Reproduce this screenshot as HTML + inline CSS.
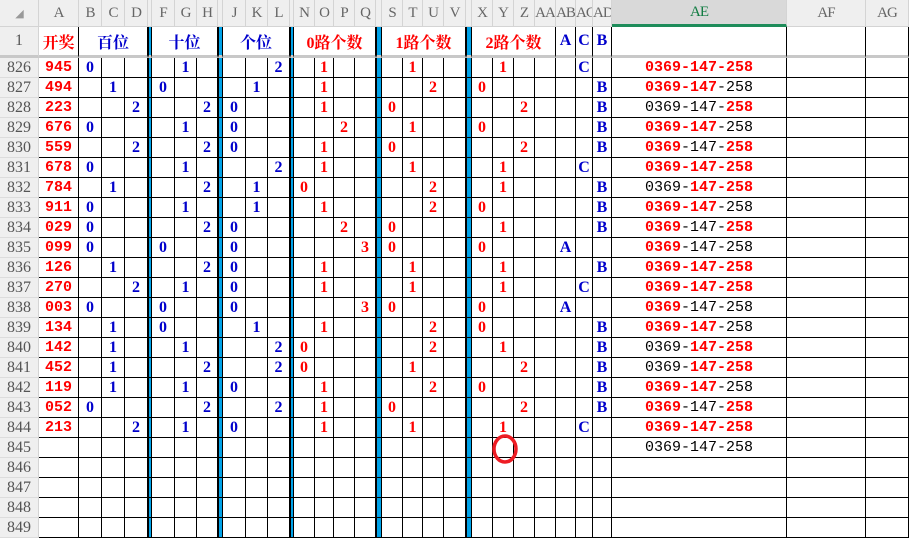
<!DOCTYPE html>
<html><head><meta charset="utf-8"><style>
*{margin:0;padding:0;box-sizing:border-box}
body{width:909px;height:538px;overflow:hidden;background:#fff;position:relative}
table{border-collapse:separate;border-spacing:0;table-layout:fixed;width:909px;font-family:"Liberation Mono",monospace;font-size:15px;font-weight:bold}
td,th{padding:0;text-align:center;white-space:nowrap;overflow:hidden}
tr.hd td,tr.hd th{height:27px;background:#efefef;color:#666;font-weight:normal;font-family:"Liberation Serif",serif;font-size:15px;border-right:1px solid #d4d4d4;border-bottom:1px solid #d4d4d4;letter-spacing:-1px}
tr.hd td.sel{background:#d9d9d9;color:#107c41;border-bottom:3px solid #1e8c5a}
th{background:#efefef;color:#555;font-weight:normal;font-family:"Liberation Serif",serif;font-size:16px;border-right:1px solid #d4d4d4;border-bottom:1px solid #dcdcdc}
tr.h1 td,tr.h1 th{height:31px;border-bottom:3px solid #c8c8c8}
tr.h1 td{border-right:1px solid #000;font-family:"Liberation Serif","Noto Serif CJK SC",serif;font-size:16px;font-weight:bold}
tr.d td{height:20px;border-right:1px solid #000;border-bottom:1px solid #000;line-height:19px;font-family:"Liberation Serif",serif;font-size:16px}
tr.d th{height:20px}
.r{color:#f00}.u{color:#0000cc}
td.bl{background:#00a2e8;border-left:1px solid #000}
tr.d td:nth-child(2){color:#f00;font-family:"Liberation Mono",monospace;font-size:15px}
tr.d td:nth-child(n+3){color:#0000cc}
tr.d td:nth-child(n+15){color:#f00}
tr.d td:nth-child(n+29){color:#0000cc}
tr.d td:nth-child(6),tr.d td:nth-child(10),tr.d td:nth-child(14),tr.d td:nth-child(19),tr.d td:nth-child(24){background:#00a2e8;border-left:1px solid #000}
tr.d td:nth-child(32){color:#000;font-weight:normal;font-family:"Liberation Mono",monospace;font-size:15px}
tr.d td:nth-child(32) b{color:#f00}
</style></head><body>
<table>
<colgroup><col style="width:39px"><col style="width:40px"><col style="width:23px"><col style="width:23px"><col style="width:23px"><col style="width:4px"><col style="width:23px"><col style="width:22px"><col style="width:21px"><col style="width:5px"><col style="width:23px"><col style="width:22px"><col style="width:22px"><col style="width:4px"><col style="width:21px"><col style="width:19px"><col style="width:21px"><col style="width:21px"><col style="width:6px"><col style="width:21px"><col style="width:20px"><col style="width:21px"><col style="width:22px"><col style="width:6px"><col style="width:21px"><col style="width:21px"><col style="width:21px"><col style="width:21px"><col style="width:20px"><col style="width:17px"><col style="width:19px"><col style="width:175px"><col style="width:79px"><col style="width:43px"></colgroup>
<tr class="hd"><td style="color:#999;font-size:11px">◢</td><td>A</td><td>B</td><td>C</td><td>D</td><td></td><td>F</td><td>G</td><td>H</td><td></td><td>J</td><td>K</td><td>L</td><td></td><td>N</td><td>O</td><td>P</td><td>Q</td><td></td><td>S</td><td>T</td><td>U</td><td>V</td><td></td><td>X</td><td>Y</td><td>Z</td><td>AA</td><td>AB</td><td>AC</td><td>AD</td><td class="sel">AE</td><td>AF</td><td>AG</td></tr>
<tr class="h1"><th>1</th><td class="r">开奖</td><td colspan="3" class="u">百位</td><td class="bl"></td><td colspan="3" class="u">十位</td><td class="bl"></td><td colspan="3" class="u">个位</td><td class="bl"></td><td colspan="4" class="r">0路个数</td><td class="bl"></td><td colspan="4" class="r">1路个数</td><td class="bl"></td><td colspan="4" class="r">2路个数</td><td class="u">A</td><td class="u">C</td><td class="u">B</td><td></td><td></td><td></td></tr>
<tr class="d"><th>826<td>945<td>0<td><td><td><td><td>1<td><td><td><td><td>2<td><td><td>1<td><td><td><td><td>1<td><td><td><td><td>1<td><td><td><td>C<td><td><b>0369-147-258</b><td><td></tr>
<tr class="d"><th>827<td>494<td><td>1<td><td><td>0<td><td><td><td><td>1<td><td><td><td>1<td><td><td><td><td><td>2<td><td><td>0<td><td><td><td><td><td>B<td><b>0369-147</b>-258<td><td></tr>
<tr class="d"><th>828<td>223<td><td><td>2<td><td><td><td>2<td><td>0<td><td><td><td><td>1<td><td><td><td>0<td><td><td><td><td><td><td>2<td><td><td><td>B<td>0369-147-<b>258</b><td><td></tr>
<tr class="d"><th>829<td>676<td>0<td><td><td><td><td>1<td><td><td>0<td><td><td><td><td><td>2<td><td><td><td>1<td><td><td><td>0<td><td><td><td><td><td>B<td><b>0369-147</b>-258<td><td></tr>
<tr class="d"><th>830<td>559<td><td><td>2<td><td><td><td>2<td><td>0<td><td><td><td><td>1<td><td><td><td>0<td><td><td><td><td><td><td>2<td><td><td><td>B<td><b>0369</b>-147-<b>258</b><td><td></tr>
<tr class="d"><th>831<td>678<td>0<td><td><td><td><td>1<td><td><td><td><td>2<td><td><td>1<td><td><td><td><td>1<td><td><td><td><td>1<td><td><td><td>C<td><td><b>0369-147-258</b><td><td></tr>
<tr class="d"><th>832<td>784<td><td>1<td><td><td><td><td>2<td><td><td>1<td><td><td>0<td><td><td><td><td><td><td>2<td><td><td><td>1<td><td><td><td><td>B<td>0369-<b>147-258</b><td><td></tr>
<tr class="d"><th>833<td>911<td>0<td><td><td><td><td>1<td><td><td><td>1<td><td><td><td>1<td><td><td><td><td><td>2<td><td><td>0<td><td><td><td><td><td>B<td><b>0369-147</b>-258<td><td></tr>
<tr class="d"><th>834<td>029<td>0<td><td><td><td><td><td>2<td><td>0<td><td><td><td><td><td>2<td><td><td>0<td><td><td><td><td><td>1<td><td><td><td><td>B<td><b>0369</b>-147-<b>258</b><td><td></tr>
<tr class="d"><th>835<td>099<td>0<td><td><td><td>0<td><td><td><td>0<td><td><td><td><td><td><td>3<td><td>0<td><td><td><td><td>0<td><td><td><td>A<td><td><td><b>0369</b>-147-258<td><td></tr>
<tr class="d"><th>836<td>126<td><td>1<td><td><td><td><td>2<td><td>0<td><td><td><td><td>1<td><td><td><td><td>1<td><td><td><td><td>1<td><td><td><td><td>B<td><b>0369-147-258</b><td><td></tr>
<tr class="d"><th>837<td>270<td><td><td>2<td><td><td>1<td><td><td>0<td><td><td><td><td>1<td><td><td><td><td>1<td><td><td><td><td>1<td><td><td><td>C<td><td><b>0369-147-258</b><td><td></tr>
<tr class="d"><th>838<td>003<td>0<td><td><td><td>0<td><td><td><td>0<td><td><td><td><td><td><td>3<td><td>0<td><td><td><td><td>0<td><td><td><td>A<td><td><td><b>0369</b>-147-258<td><td></tr>
<tr class="d"><th>839<td>134<td><td>1<td><td><td>0<td><td><td><td><td>1<td><td><td><td>1<td><td><td><td><td><td>2<td><td><td>0<td><td><td><td><td><td>B<td><b>0369-147</b>-258<td><td></tr>
<tr class="d"><th>840<td>142<td><td>1<td><td><td><td>1<td><td><td><td><td>2<td><td>0<td><td><td><td><td><td><td>2<td><td><td><td>1<td><td><td><td><td>B<td>0369-<b>147-258</b><td><td></tr>
<tr class="d"><th>841<td>452<td><td>1<td><td><td><td><td>2<td><td><td><td>2<td><td>0<td><td><td><td><td><td>1<td><td><td><td><td><td>2<td><td><td><td>B<td>0369-<b>147-258</b><td><td></tr>
<tr class="d"><th>842<td>119<td><td>1<td><td><td><td>1<td><td><td>0<td><td><td><td><td>1<td><td><td><td><td><td>2<td><td><td>0<td><td><td><td><td><td>B<td><b>0369-147</b>-258<td><td></tr>
<tr class="d"><th>843<td>052<td>0<td><td><td><td><td><td>2<td><td><td><td>2<td><td><td>1<td><td><td><td>0<td><td><td><td><td><td><td>2<td><td><td><td>B<td><b>0369</b>-147-<b>258</b><td><td></tr>
<tr class="d"><th>844<td>213<td><td><td>2<td><td><td>1<td><td><td>0<td><td><td><td><td>1<td><td><td><td><td>1<td><td><td><td><td>1<td><td><td><td>C<td><td><b>0369-147-258</b><td><td></tr>
<tr class="d"><th>845<td><td><td><td><td><td><td><td><td><td><td><td><td><td><td><td><td><td><td><td><td><td><td><td><td><td><td><td><td><td><td>0369-147-258<td><td></tr>
<tr class="d"><th>846<td><td><td><td><td><td><td><td><td><td><td><td><td><td><td><td><td><td><td><td><td><td><td><td><td><td><td><td><td><td><td><td><td></tr>
<tr class="d"><th>847<td><td><td><td><td><td><td><td><td><td><td><td><td><td><td><td><td><td><td><td><td><td><td><td><td><td><td><td><td><td><td><td><td></tr>
<tr class="d"><th>848<td><td><td><td><td><td><td><td><td><td><td><td><td><td><td><td><td><td><td><td><td><td><td><td><td><td><td><td><td><td><td><td><td></tr>
<tr class="d"><th>849<td><td><td><td><td><td><td><td><td><td><td><td><td><td><td><td><td><td><td><td><td><td><td><td><td><td><td><td><td><td><td><td><td></tr>
</table>
<svg style="position:absolute;left:0;top:0" width="909" height="538"><ellipse cx="505" cy="449" rx="11" ry="13" fill="none" stroke="#ee1c24" stroke-width="3.5"/></svg>
</body></html>
